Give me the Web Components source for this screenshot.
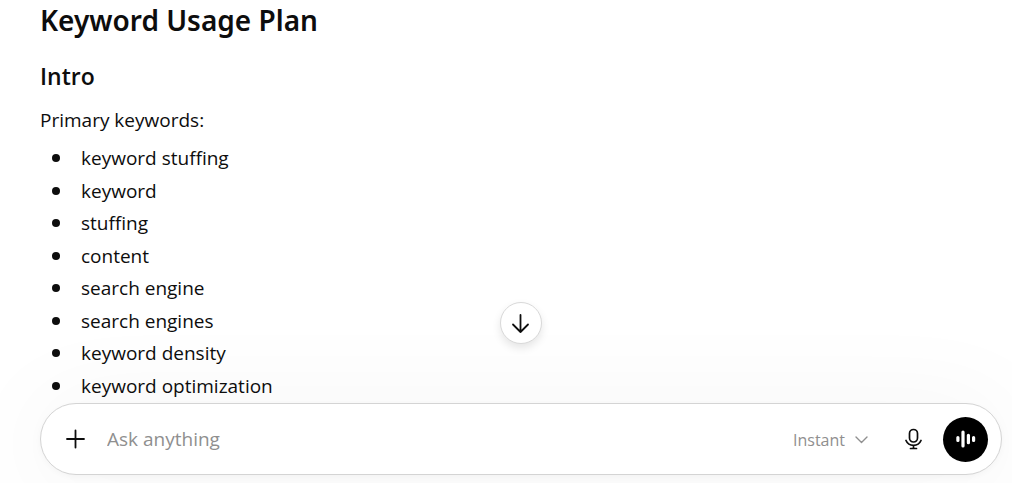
<!DOCTYPE html>
<html lang="en">
<head>
<meta charset="utf-8">
<meta name="viewport" content="width=device-width, initial-scale=1">
<title>Keyword Usage Plan</title>
<style>
  html, body { margin: 0; background: #fff; }
  body { font-family: "Open Sans", "Noto Sans", sans-serif; color: #0d0d0d; overflow: hidden; }
</style>
</head>
<body>
<chat-page>
  <plan-message>
    <h2 slot="title">Keyword Usage Plan</h2>
    <h3 slot="section">Intro</h3>
    <p slot="lead">Primary keywords:</p>
    <keyword-list></keyword-list>
  </plan-message>
  <scroll-button slot="overlay"></scroll-button>
  <prompt-composer slot="composer"></prompt-composer>
</chat-page>

<script>
const define = (name, html, setup) => customElements.define(name, class extends HTMLElement {
  constructor() {
    super();
    this.attachShadow({ mode: "open" }).innerHTML = html;
    if (setup) setup(this.shadowRoot);
  }
});

define("chat-page", `
  <style>
    :host { display: flex; flex-direction: column; min-height: 100vh; box-sizing: border-box; padding: 0 10px 8px 40px; position: relative; }
    main { flex: 1; }
    .overlay { position: absolute; left: 0; right: 0; bottom: 139px; display: flex; justify-content: center; padding-left: 30px; z-index: 1; }
  </style>
  <main><slot></slot></main>
  <div class="overlay"><slot name="overlay"></slot></div>
  <slot name="composer"></slot>
`);

define("plan-message", `
  <style>
    :host { display: block; position: relative; z-index: 1; }
    ::slotted(h2) { margin: 0 0 20px; font-family: "Noto Sans", sans-serif; font-size: 28px; line-height: 40px; font-weight: 600; }
    ::slotted(h3) { margin: 0 0 12px; font-size: 23px; line-height: 32px; font-weight: 600; }
    ::slotted(p) { margin: 0 0 6px; font-size: 19px; line-height: 32px; }
  </style>
  <slot name="title"></slot>
  <slot name="section"></slot>
  <slot name="lead"></slot>
  <slot></slot>
`);

define("keyword-list", `
  <style>
    :host { display: block; font-size: 19px; line-height: 32px; }
    ul { display: grid; grid-auto-rows: 1fr; min-height: 260px; margin: 0; padding: 0 0 0 12px; list-style: none; }
    li { display: flex; align-items: center; gap: 21px; }
    li::before { content: ""; width: 8px; height: 8px; border-radius: 50%; background: currentColor; }
  </style>
  <ul></ul>
`, root => {
  const words = ["keyword stuffing", "keyword", "stuffing", "content", "search engine", "search engines", "keyword density", "keyword optimization"];
  root.querySelector("ul").append(...words.map(word => {
    const item = document.createElement("li");
    item.textContent = word;
    return item;
  }));
});

define("scroll-button", `
  <style>
    :host { display: block; }
    button { display: grid; place-items: center; width: 42px; height: 42px; padding: 0; border: 1px solid #d9d9d9; border-radius: 50%; background: #fff; color: #0d0d0d; box-shadow: 0 4px 8px rgba(0,0,0,.1); }
    svg { display: block; }
  </style>
  <button type="button" aria-label="Scroll to bottom">
    <svg width="24" height="24" viewBox="0 0 24 24" fill="none" stroke="currentColor" stroke-width="1.8" stroke-linecap="round" stroke-linejoin="round"><path d="M11.500 4v17M4 13.500 11.500 21l7.500-7.500"/></svg>
  </button>
`);

define("prompt-composer", `
  <style>
    :host { display: block; }
    form { display: flex; align-items: center; box-sizing: border-box; min-height: 72px; margin: 0; padding: 0 13px 0 22px; border: 1px solid #d4d4d4; border-radius: 36px; background: #fff; box-shadow: 0 5px 100px 10px rgba(0,0,0,.04), 0 2px 6px rgba(0,0,0,.03); }
    button { display: grid; place-items: center; flex: none; padding: 0; border: 0; background: none; color: #0d0d0d; font: inherit; }
    svg { display: block; }
    .add { width: 26px; height: 44px; }
    input { flex: 1; min-width: 0; margin: 0 16px 0 18px; padding: 0; border: 0; outline: 0; background: none; color: #0d0d0d; font-family: inherit; font-size: 19px; line-height: 32px; }
    input::placeholder { color: #8f8f8f; opacity: 1; }
    .model { display: flex; align-items: center; gap: 10px; margin-right: 35px; padding-top: 2px; color: #8f8f8f; font-size: 16px; line-height: 32px; }
    .mic { width: 22px; height: 44px; margin-right: 18px; }
    .voice { width: 45px; height: 45px; border-radius: 50%; background: #000; color: #fff; }
  </style>
  <form>
    <button class="add" type="button" aria-label="Add files">
      <svg width="20" height="20" viewBox="0 0 20 20" fill="none" stroke="currentColor" stroke-width="1.8" stroke-linecap="round"><path d="M9.500 1.500v17M1 10h17"/></svg>
    </button>
    <input type="text" aria-label="Message" placeholder="Ask anything">
    <button class="model" type="button">Instant
      <svg width="13" height="9" viewBox="0 0 13 9" fill="none" stroke="currentColor" stroke-width="1.400" stroke-linecap="round" stroke-linejoin="round"><path d="M1 1l5.500 5.500L12 1"/></svg>
    </button>
    <button class="mic" type="button" aria-label="Dictate">
      <svg width="18" height="22" viewBox="0 0 18 22" fill="none" stroke="currentColor" stroke-width="1.700" stroke-linecap="round" stroke-linejoin="round"><rect x="4.500" y="1.500" width="8" height="12.500" rx="4"/><path d="M1 12.500C2.300 15.600 5 17.300 8.500 17.300s6.200-1.700 7.500-4.800M8.500 17.300v3.200M5.500 20.500h6"/></svg>
    </button>
    <button class="voice" type="button" aria-label="Use voice">
      <svg width="20" height="18" viewBox="0 0 20 18" fill="none" stroke="currentColor" stroke-width="3.200" stroke-linecap="round"><path d="M1.900 7.500v3M7 2v14M12.400 5.300v7.400M17.600 7.500v3"/></svg>
    </button>
  </form>
`);
</script>
</body>
</html>
